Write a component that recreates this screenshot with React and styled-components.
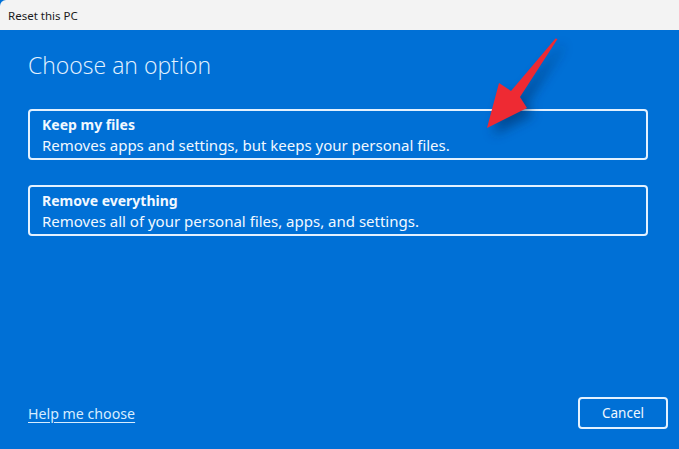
import React from "react";
import styled, { createGlobalStyle } from "styled-components";

const Global = createGlobalStyle`
  html, body {
    margin: 0;
    padding: 0;
    width: 679px;
    height: 449px;
    overflow: hidden;
    font-family: "Noto Sans", "Open Sans", sans-serif;
  }
`;

const Window = styled.div`
  width: 679px;
  height: 449px;
  display: flex;
  flex-direction: column;
  background: #0070d6;
`;

const TitleBar = styled.div`
  height: 30px;
  flex: none;
  background: #f3f3f3;
  color: #1a1a1a;
  font-size: 11.5px;
  display: flex;
  align-items: center;
  padding-left: 8px;
  border-top-left-radius: 6px;
`;

const Body = styled.div`
  position: relative;
  flex: 1;
  display: flex;
  flex-direction: column;
  padding: 21px 31px 20px 28px;
`;

const Heading = styled.h1`
  margin: 0 0 29px;
  font-family: "Open Sans", sans-serif;
  font-weight: 300;
  font-size: 23px;
  line-height: 29px;
  color: #e4f2ff;
`;

const Options = styled.div`
  display: flex;
  flex-direction: column;
  gap: 25px;
`;

const Option = styled.button`
  display: flex;
  flex-direction: column;
  align-items: flex-start;
  height: 51px;
  padding: 4px 12px 0;
  background: transparent;
  border: 2px solid #e3f1ff;
  border-radius: 4px;
  color: #f1f8ff;
  font-family: inherit;
  text-align: left;
  cursor: pointer;
`;

const OptionTitle = styled.span`
  font-size: 14px;
  font-weight: 700;
  line-height: 20px;
`;

const OptionText = styled.span`
  font-size: 15px;
  line-height: 20px;
`;

const Footer = styled.div`
  margin-top: auto;
  display: flex;
  justify-content: space-between;
  align-items: center;
`;

const HelpLink = styled.a`
  color: #d6ecff;
  font-size: 14.2px;
  text-decoration: underline;
  text-underline-offset: 3px;
`;

const CancelButton = styled.button`
  width: 90px;
  height: 32px;
  background: transparent;
  border: 2px solid #e3f1ff;
  border-radius: 4px;
  color: #f1f8ff;
  font-family: inherit;
  font-size: 13.5px;
  margin-right: -20px;
`;

const Arrow = styled.svg`
  position: absolute;
  left: 470px;
  top: 0;
  overflow: visible;
`;

const options = [
  {
    title: "Keep my files",
    text: "Removes apps and settings, but keeps your personal files.",
  },
  {
    title: "Remove everything",
    text: "Removes all of your personal files, apps, and settings.",
  },
];

const arrowPath =
  "M557.5 39 L520 97 L527 108 L487 128 L499 83 L511 91 L555.5 38.5 Z";

export default function App() {
  return (
    <Window>
      <Global />
      <TitleBar>Reset this PC</TitleBar>
      <Body>
        <Heading>Choose an option</Heading>
        <Options>
          {options.map((o) => (
            <Option key={o.title}>
              <OptionTitle>{o.title}</OptionTitle>
              <OptionText>{o.text}</OptionText>
            </Option>
          ))}
        </Options>
        <Footer>
          <HelpLink href="#">Help me choose</HelpLink>
          <CancelButton>Cancel</CancelButton>
        </Footer>
        <Arrow width="100" height="110" viewBox="470 30 100 110">
          <defs>
            <filter id="sh" x="-50%" y="-50%" width="200%" height="200%">
              <feGaussianBlur stdDeviation="6" />
            </filter>
          </defs>
          <path
            d={arrowPath}
            fill="#002a5c"
            opacity="0.55"
            transform="translate(6 7)"
            filter="url(#sh)"
          />
          <path d={arrowPath} fill="#ee2a33" />
        </Arrow>
      </Body>
    </Window>
  );
}
